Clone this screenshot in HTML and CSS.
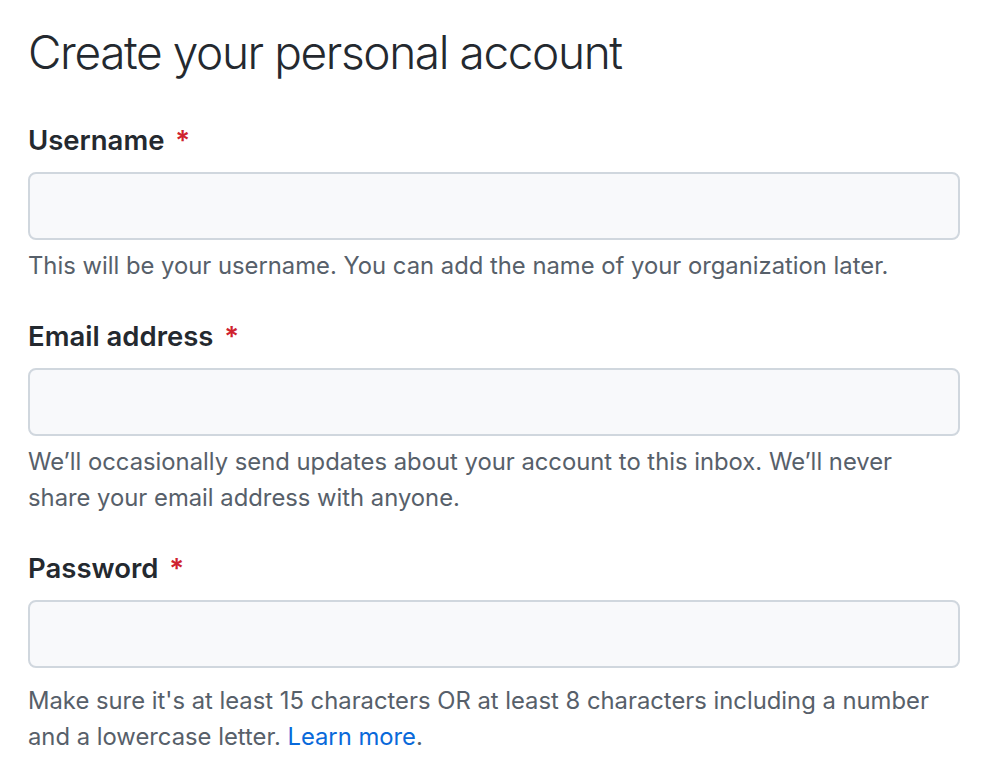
FILE: index.html
```html
<!DOCTYPE html>
<html>
<head>
<meta charset="utf-8">
<link rel="stylesheet" href="styles.css">
</head>
<body>
<main class="page">
  <h1 class="title">Create your personal account</h1>
  <div class="field">
    <label class="label">Username <span class="req">*</span></label>
    <input class="input" type="text">
    <p class="note">This will be your username. You can add the name of your organization later.</p>
  </div>
  <div class="field">
    <label class="label">Email address <span class="req">*</span></label>
    <input class="input" type="email">
    <p class="note">We’ll occasionally send updates about your account to this inbox. We’ll never share your email address with anyone.</p>
  </div>
  <div class="field">
    <label class="label">Password <span class="req">*</span></label>
    <input class="input" type="password">
    <p class="note note-spaced">Make sure it's at least 15 characters OR at least 8 characters including a number and a lowercase letter. <a class="link" href="#">Learn more</a>.</p>
  </div>
</main>
</body>
</html>
```
FILE: styles.css
```css
html, body {
  margin: 0;
  padding: 0;
  background: #ffffff;
}
body {
  font-family: Inter, "Noto Sans", "Liberation Sans", sans-serif;
  color: #24292f;
}
.page {
  padding: 22px 30px 0 28px;
  width: 932px;
}
.title {
  margin: 0 0 38px;
  font-size: 46px;
  font-weight: 300;
  line-height: 60px;
  letter-spacing: -1.4px;
}
.field {
  display: flex;
  flex-direction: column;
  margin-bottom: 32px;
}
.label {
  font-size: 27.5px;
  font-weight: 600;
  line-height: 40px;
  margin-bottom: 12px;
}
.req {
  color: #cf222e;
  margin-left: 4px;
}
.input {
  box-sizing: border-box;
  height: 68px;
  width: 932px;
  border: 2px solid #d0d7de;
  border-radius: 8px;
  background: #f8f9fb;
  margin: 0;
}
.note {
  margin: 8px 0 0;
  font-size: 23.8px;
  line-height: 36px;
  color: #57606a;
}
.note-spaced {
  margin-top: 15px;
}
.link {
  color: #0969da;
  text-decoration: none;
}
```
